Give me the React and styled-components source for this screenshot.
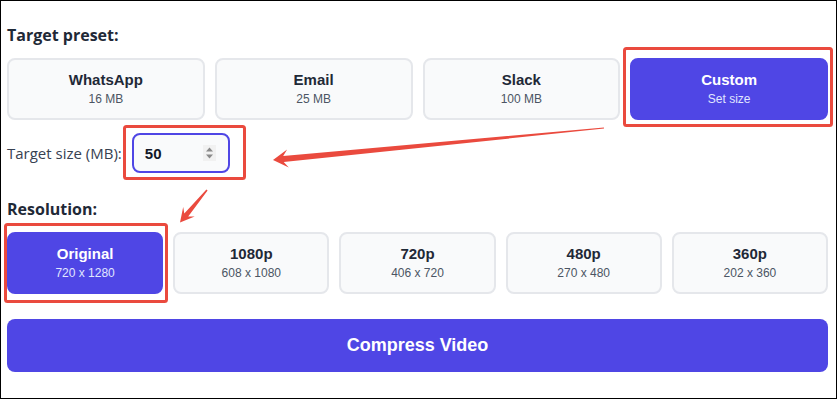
import React from 'react';
import styled, { createGlobalStyle } from 'styled-components';

const GlobalStyle = createGlobalStyle`
  html, body {
    margin: 0;
    padding: 0;
    background: #ffffff;
  }
`;

const Frame = styled.div`
  position: relative;
  width: 837px;
  height: 399px;
  box-sizing: border-box;
  border: 1px solid #000;
  padding: 22px 8px 0 6px;
  font-family: "Liberation Sans", Arial, sans-serif;
  color: #1f2937;
`;

const Heading = styled.h3`
  margin: ${(p) => p.$top || 0}px 0 11px;
  font-family: "Open Sans", "Noto Sans", sans-serif;
  font-size: 16px;
  font-weight: 700;
  line-height: 24px;
  color: #1f2937;
`;

const CardGrid = styled.div`
  display: grid;
  grid-template-columns: repeat(${(p) => p.$cols}, 1fr);
  gap: 10px;
`;

const Card = styled.div`
  height: 62px;
  box-sizing: border-box;
  border: 2px solid ${(p) => (p.$active ? '#4f46e5' : '#e5e7eb')};
  border-radius: 8px;
  background: ${(p) => (p.$active ? '#4f46e5' : '#f9fafb')};
  display: flex;
  flex-direction: column;
  align-items: center;
  justify-content: center;
  gap: 2px;
`;

const CardTitle = styled.div`
  font-size: 15px;
  font-weight: 700;
  line-height: 18px;
  color: ${(p) => (p.$active ? '#ffffff' : '#1f2937')};
`;

const CardSub = styled.div`
  font-size: 12px;
  line-height: 16px;
  color: ${(p) => (p.$active ? '#e0e7ff' : '#4b5563')};
`;

const SizeRow = styled.div`
  display: flex;
  align-items: center;
  gap: 10px;
  margin-top: 13px;
`;

const SizeLabel = styled.label`
  font-family: "Open Sans", "Noto Sans", sans-serif;
  font-size: 15px;
  color: #374151;
`;

const InputBox = styled.div`
  width: 98px;
  height: 40px;
  box-sizing: border-box;
  border: 2px solid #4f46e5;
  border-radius: 8px;
  background: #f9fafb;
  display: flex;
  align-items: center;
  justify-content: space-between;
  padding: 0 12px 0 11px;
`;

const InputValue = styled.span`
  font-size: 15px;
  font-weight: 700;
  color: #111827;
`;

const Spinner = styled.svg`
  display: block;
  background: #f1f1f1;
`;

const CompressButton = styled.button`
  display: block;
  width: 100%;
  height: 53px;
  margin-top: 25px;
  border: none;
  border-radius: 8px;
  background: #4f46e5;
  color: #ffffff;
  font-family: "Liberation Sans", Arial, sans-serif;
  font-size: 18px;
  font-weight: 700;
`;

const Overlay = styled.svg`
  position: absolute;
  left: -1px;
  top: -1px;
  pointer-events: none;
`;

const presets = [
  { name: 'WhatsApp', sub: '16 MB' },
  { name: 'Email', sub: '25 MB' },
  { name: 'Slack', sub: '100 MB' },
  { name: 'Custom', sub: 'Set size', active: true },
];

const resolutions = [
  { name: 'Original', sub: '720 x 1280', active: true },
  { name: '1080p', sub: '608 x 1080' },
  { name: '720p', sub: '406 x 720' },
  { name: '480p', sub: '270 x 480' },
  { name: '360p', sub: '202 x 360' },
];

// tapered arrow with a notched head, pointing from tail to tip
function arrowPoints(tip, tail, headLen, headHalf, shaftHead, shaftTail) {
  const dx = tail[0] - tip[0];
  const dy = tail[1] - tip[1];
  const len = Math.hypot(dx, dy);
  const u = [dx / len, dy / len];
  const p = [-u[1], u[0]];
  const at = (d, s) => [tip[0] + u[0] * d + p[0] * s, tip[1] + u[1] * d + p[1] * s];
  const notch = headLen * 0.7;
  const pts = [
    tip,
    at(headLen, headHalf),
    at(notch, shaftHead / 2),
    at(len, shaftTail / 2),
    at(len, -shaftTail / 2),
    at(notch, -shaftHead / 2),
    at(headLen, -headHalf),
  ];
  return pts.map((q) => q.map((n) => n.toFixed(1)).join(',')).join(' ');
}

const RED = '#ea4a3e';

function Annotations() {
  return (
    <Overlay width="837" height="399" viewBox="0 0 837 399">
      <g fill="none" stroke={RED} strokeWidth="3">
        <rect x="624.5" y="48.5" width="207" height="77" rx="2" />
        <rect x="124.5" y="126.5" width="120" height="52" rx="2" />
        <rect x="5.5" y="224.5" width="161" height="77" rx="2" />
      </g>
      <polygon fill={RED} points={arrowPoints([273, 160], [604, 128], 15, 9, 6, 1.2)} />
      <polygon fill={RED} points={arrowPoints([180, 222.5], [207, 190], 14, 7.5, 5, 1.5)} />
    </Overlay>
  );
}

export default function App() {
  return (
    <>
      <GlobalStyle />
      <Frame>
        <Heading>Target preset:</Heading>
        <CardGrid $cols={4}>
          {presets.map((p) => (
            <Card key={p.name} $active={p.active}>
              <CardTitle $active={p.active}>{p.name}</CardTitle>
              <CardSub $active={p.active}>{p.sub}</CardSub>
            </Card>
          ))}
        </CardGrid>

        <SizeRow>
          <SizeLabel>Target size (MB):</SizeLabel>
          <InputBox>
            <InputValue>50</InputValue>
            <Spinner width="13" height="16" viewBox="0 0 13 16">
              <path d="M6.5 2.5 L10 6.5 L3 6.5 Z" fill="#8a8a8a" />
              <path d="M6.5 13.5 L10 9.5 L3 9.5 Z" fill="#8a8a8a" />
            </Spinner>
          </InputBox>
        </SizeRow>

        <Heading $top={24}>Resolution:</Heading>
        <CardGrid $cols={5}>
          {resolutions.map((r) => (
            <Card key={r.name} $active={r.active}>
              <CardTitle $active={r.active}>{r.name}</CardTitle>
              <CardSub $active={r.active}>{r.sub}</CardSub>
            </Card>
          ))}
        </CardGrid>

        <CompressButton>Compress Video</CompressButton>
        <Annotations />
      </Frame>
    </>
  );
}
